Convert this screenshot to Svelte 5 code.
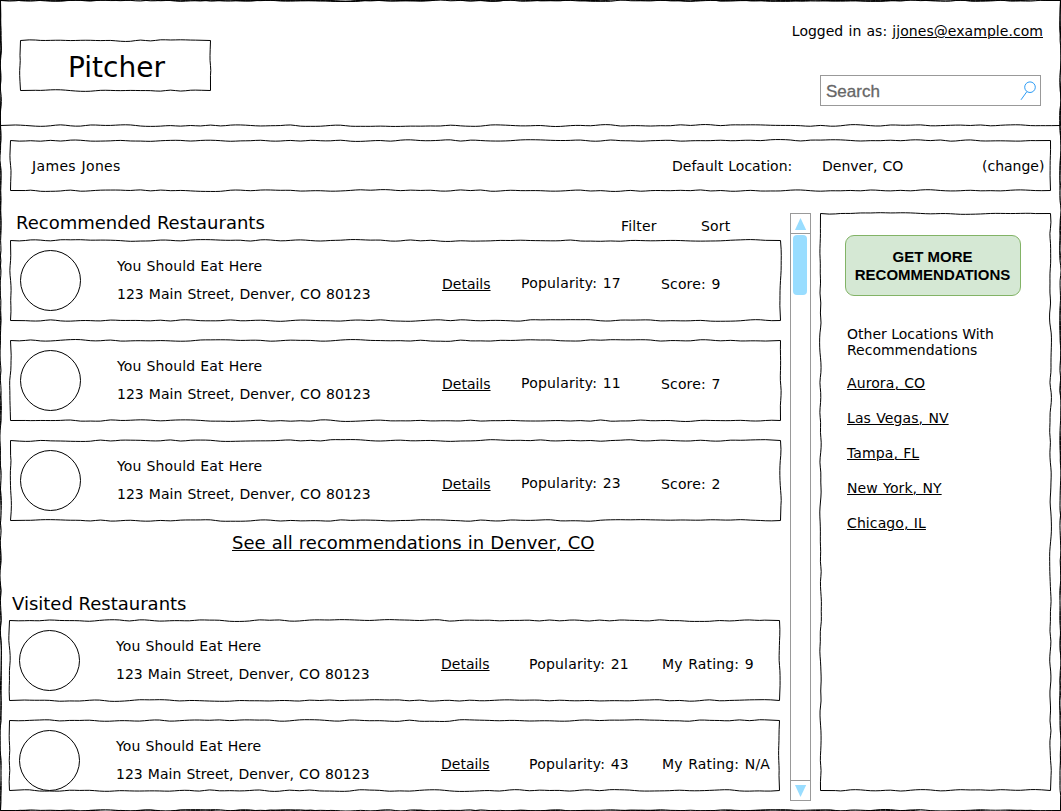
<script>
  const recommended = [
    { popularity: '17', rating: 'Score: 9' },
    { popularity: '11', rating: 'Score: 7' },
    { popularity: '23', rating: 'Score: 2' }
  ];
  const visited = [
    { popularity: '21', rating: 'My Rating: 9', height: 81 },
    { popularity: '43', rating: 'My Rating: N/A', height: 71 }
  ];
  const locations = ['Aurora, CO', 'Las Vegas, NV', 'Tampa, FL', 'New York, NY', 'Chicago, IL'];

  // Hand-drawn outline: each edge is a chain of smooth curves through slightly shifted points.
  function sketch(w, h, seed) {
    let s = seed * 7919 + 17;
    const rand = () => {
      s = (s * 16807) % 2147483647;
      return s / 2147483647;
    };
    for (let i = 0; i < 4; i++) rand();
    const corners = [[0.5, 0.5], [w - 0.5, 0.5], [w - 0.5, h - 0.5], [0.5, h - 0.5]];
    let d = 'M0.5 0.5';
    for (let i = 0; i < 4; i++) {
      const [x1, y1] = corners[i];
      const [x2, y2] = corners[(i + 1) % 4];
      const len = Math.hypot(x2 - x1, y2 - y1);
      const n = Math.max(2, Math.round(len / 10));
      const pts = [];
      for (let k = 1; k < n; k++) {
        const o = (rand() - 0.5) * 2.1;
        const t = k / n;
        pts.push([x1 + (x2 - x1) * t + (y1 === y2 ? 0 : o), y1 + (y2 - y1) * t + (y1 === y2 ? o : 0)]);
      }
      for (let k = 0; k < pts.length - 1; k++) {
        const [ax, ay] = pts[k];
        const [bx, by] = pts[k + 1];
        d += `Q${ax.toFixed(2)} ${ay.toFixed(2)} ${((ax + bx) / 2).toFixed(2)} ${((ay + by) / 2).toFixed(2)}`;
      }
      d += `L${x2} ${y2}`;
    }
    return d + 'Z';
  }
</script>

{#snippet outline(w, h, seed)}
  <svg class="outline" width={w} height={h} aria-hidden="true"><path d={sketch(w, h, seed)} /></svg>
{/snippet}

{#snippet card(item, h, seed)}
  <article class="card" style="height: {h}px">
    {@render outline(771, h, seed)}
    <svg class="avatar" width="61" height="61" aria-hidden="true"><circle cx="30.5" cy="30.5" r="30" /></svg>
    <div class="info">
      <span class="name">You Should Eat Here</span>
      <span class="address">123 Main Street, Denver, CO 80123</span>
    </div>
    <span class="link details">Details</span>
    <span class="popularity">Popularity: {item.popularity}</span>
    <span class="rating">{item.rating}</span>
  </article>
{/snippet}

<div class="page">
  {@render outline(1061, 811, 1)}
  {@render outline(1061, 811, 6)}
  <header>
    {@render outline(1061, 126, 2)}
    <div class="logo">
      {@render outline(191, 51, 3)}
      Pitcher
    </div>
    <div class="account">
      <p>Logged in as: <span class="link">jjones@example.com</span></p>
      <div class="search">
        <span>Search</span>
        <svg width="18" height="20" viewBox="0 0 18 20" aria-hidden="true">
          <circle cx="10" cy="6.2" r="5.3" />
          <path d="M6.9 10.6 L1 18.8" />
        </svg>
      </div>
    </div>
  </header>

  <section class="profile">
    {@render outline(1041, 51, 4)}
    <span class="user">James Jones</span>
    <span>Default Location:</span>
    <span>Denver, CO</span>
    <span>(change)</span>
  </section>

  <main>
    <div class="lists">
      <div class="head">
        <h2>Recommended Restaurants</h2>
        <span>Filter</span>
        <span>Sort</span>
      </div>
      <div class="cards">
        {#each recommended as r, i}
          {@render card(r, 81, 10 + i)}
        {/each}
      </div>
      <p class="all"><span class="link">See all recommendations in Denver, CO</span></p>
      <div class="visited">
        <h2>Visited Restaurants</h2>
        <div class="cards">
          {#each visited as r, i}
            {@render card(r, r.height, 20 + i)}
          {/each}
        </div>
      </div>
    </div>

    <div class="scrollbar">
      <div class="arrow"><svg width="12" height="12" aria-hidden="true"><path d="M5.5 0 L11.2 12 H0 Z" /></svg></div>
      <div class="track"><div class="thumb"></div></div>
      <div class="arrow"><svg width="12" height="12" aria-hidden="true"><path d="M0 0 H11.2 L5.5 12 Z" /></svg></div>
    </div>

    <aside>
      {@render outline(231, 578, 5)}
      <button>GET MORE<br />RECOMMENDATIONS</button>
      <p>Other Locations With Recommendations</p>
      <ul>
        {#each locations as name}
          <li><span class="link">{name}</span></li>
        {/each}
      </ul>
    </aside>
  </main>
</div>

<style>
  :global(body) {
    margin: 0;
    background: #fff;
  }
  .page {
    position: relative;
    box-sizing: border-box;
    width: 1061px;
    height: 811px;
    overflow: hidden;
    background: #fff;
    color: #000;
    font: 14px/16px 'DejaVu Sans', Verdana, sans-serif;
    white-space: nowrap;
  }
  h2, p, ul {
    margin: 0;
    padding: 0;
  }
  h2 {
    font-size: 18px;
    line-height: 21px;
    font-weight: 400;
  }
  .outline {
    position: absolute;
    inset: 0;
    overflow: visible;
    pointer-events: none;
  }
  .outline path {
    fill: none;
    stroke: #000;
    stroke-width: 1;
  }
  .link {
    text-decoration: underline;
    text-decoration-thickness: 1px;
    text-underline-offset: 1px;
  }
  header {
    position: relative;
    display: flex;
    justify-content: space-between;
    box-sizing: border-box;
    height: 126px;
    padding: 0 18px 0 20px;
  }
  .logo {
    position: relative;
    box-sizing: border-box;
    width: 191px;
    height: 51px;
    margin-top: 40px;
    padding-left: 2px;
    text-align: center;
    font-size: 28px;
    line-height: 55px;
  }
  .account {
    display: flex;
    flex-direction: column;
    align-items: flex-end;
    padding-top: 23px;
  }
  .account p {
    word-spacing: 0.8px;
  }
  .account .link {
    letter-spacing: 0.05px;
  }
  .search {
    display: flex;
    align-items: center;
    justify-content: space-between;
    box-sizing: border-box;
    width: 221px;
    height: 31px;
    margin: 36px 2px 0 0;
    padding: 0 2px 0 5px;
    border: 1px solid #999;
    color: #666;
    font: 17px/29px 'Liberation Sans', Arial, sans-serif;
    -webkit-text-stroke: 0.3px #666;
  }
  .search span {
    padding-top: 2px;
  }
  .search svg {
    fill: none;
    stroke: #2d9cf5;
    stroke-width: 1;
  }
  .profile {
    position: relative;
    display: grid;
    grid-template-columns: 640px 150px 160px auto;
    box-sizing: border-box;
    width: 1041px;
    height: 51px;
    margin: 14px 0 0 10px;
    padding: 18px 0 0 22px;
    word-spacing: 0.7px;
  }
  .user {
    letter-spacing: 0.35px;
  }
  main {
    display: flex;
    margin-top: 22px;
  }
  .lists {
    width: 790px;
  }
  .head {
    display: grid;
    grid-template-columns: 605px 80px auto;
    height: 27px;
    padding-left: 16px;
  }
  .head h2 {
    margin-top: -1px;
  }
  .head span {
    margin-top: 5px;
    letter-spacing: 0.15px;
  }
  .cards {
    display: flex;
    flex-direction: column;
    gap: 19px;
    padding-left: 10px;
  }
  .card {
    position: relative;
    display: grid;
    grid-template-columns: 97px 325px 79px 140px auto;
    align-items: start;
    box-sizing: border-box;
    width: 771px;
    padding-left: 10px;
  }
  .avatar {
    margin-top: 10px;
    fill: none;
    stroke: #000;
  }
  .info {
    display: flex;
    flex-direction: column;
    gap: 12px;
    padding-top: 18px;
  }
  .name {
    letter-spacing: 0.12px;
    word-spacing: 0.5px;
  }
  .address {
    word-spacing: 0.7px;
  }
  .details, .rating {
    margin-top: 36px;
  }
  .popularity {
    margin-top: 35px;
    word-spacing: 1px;
    letter-spacing: 0.2px;
  }
  .rating {
    word-spacing: 1px;
    letter-spacing: 0.15px;
  }
  .all {
    margin: 11px 0 0 232px;
    font-size: 18px;
    line-height: 21px;
    word-spacing: 0.4px;
  }
  .visited {
    margin-top: 40px;
  }
  .visited h2 {
    margin-left: 12px;
    height: 27px;
  }
  .visited .cards {
    padding-left: 9px;
  }
  .visited .card {
    grid-template-columns: 97px 325px 88px 133px auto;
  }
  .visited .popularity {
    margin-top: 36px;
  }
  .scrollbar {
    display: flex;
    flex-direction: column;
    box-sizing: border-box;
    width: 21px;
    height: 588px;
    border: 1px solid #999;
  }
  .arrow {
    display: flex;
    justify-content: center;
    align-items: center;
    height: 19px;
  }
  .arrow svg {
    fill: #9df;
  }
  .track {
    flex: 1;
    padding: 1px 0 0 2px;
    border: solid #999;
    border-width: 1px 0;
  }
  .thumb {
    width: 14px;
    height: 60px;
    border-radius: 4px;
    background: #9df;
  }
  aside {
    position: relative;
    box-sizing: border-box;
    width: 231px;
    height: 578px;
    margin-left: 9px;
    padding: 22px 25px 0;
  }
  button {
    display: block;
    width: 176px;
    height: 61px;
    padding: 0 1px 0 0;
    border: 1px solid #82b366;
    border-radius: 9px;
    background: #d5e8d4;
    color: #000;
    font: bold 15px/18px 'Liberation Sans', Arial, sans-serif;
  }
  aside p {
    margin: 30px 0 0 2px;
    white-space: normal;
  }
  ul {
    display: flex;
    flex-direction: column;
    gap: 19px;
    margin: 17px 0 0 2px;
    list-style: none;
    letter-spacing: 0.1px;
    word-spacing: 0.7px;
  }
</style>
